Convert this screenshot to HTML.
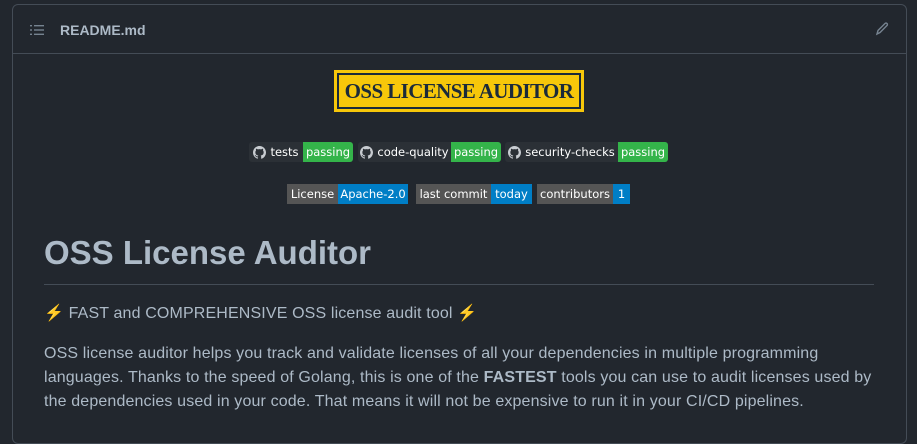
<!DOCTYPE html>
<html><head><meta charset="utf-8"><style>
*{box-sizing:border-box;margin:0;padding:0}
body{width:917px;height:425px;background:#22272e;font-family:"Liberation Sans",sans-serif;color:#adbac7;overflow:hidden;position:relative}
.box{position:absolute;left:12px;top:4px;width:895px;height:440px;border:1px solid #444c56;border-radius:6px}
.hdr{position:absolute;left:0;top:0;right:0;height:49px;border-bottom:1px solid #444c56}
.hdr .t{position:absolute;left:47px;top:17px;font-size:14px;font-weight:bold;color:#adbac7}
.abs{position:absolute}
.b{position:absolute;height:20px;font-family:"DejaVu Sans",sans-serif;font-size:11.5px;color:#fff;line-height:20px;display:flex;border-radius:3px;overflow:hidden}
.b span{display:flex;align-items:center;justify-content:center;white-space:nowrap}
.b svg{margin-right:4px}
.g{background:#2b3036}.gr{background:#34b44a}.gy{background:#555}.bl{background:#007ec6}
p{position:absolute;left:44px;font-size:16px;line-height:24px;color:#adbac7;letter-spacing:0.14px}
</style></head><body>
<div class="box"><div class="hdr">
<svg class="abs" style="left:17px;top:19px" width="14" height="12" viewBox="0 0 14 12"><g fill="#768390"><rect x="0" y="1" width="2" height="1.4"/><rect x="0" y="5.3" width="2" height="1.4"/><rect x="0" y="9.6" width="2" height="1.4"/><rect x="4" y="1" width="10" height="1.4"/><rect x="4" y="5.3" width="10" height="1.4"/><rect x="4" y="9.6" width="10" height="1.4"/></g></svg>
<div class="t">README.md</div>
<svg class="abs" style="left:862px;top:17px" width="14" height="14" viewBox="0 0 14 14"><path d="M2 12l1-3.5 7-7a1.4 1.4 0 0 1 2 2l-7 7z" fill="none" stroke="#768390" stroke-width="1.4"/></svg>
</div></div>
<div class="abs" style="left:334px;top:70px;width:250px;height:42px;background:#f7c70a;padding:3px"><div style="border:2px solid #1b2a3a;height:100%;display:flex;align-items:center;justify-content:center;font-family:'Liberation Serif',serif;font-weight:bold;font-size:21px;color:#1b2a3a;letter-spacing:-0.6px">OSS LICENSE AUDITOR</div></div>
<svg width="0" height="0" style="position:absolute"><defs><symbol id="gh" viewBox="0 0 16 16"><path fill="#c8ccd1" d="M8 0C3.58 0 0 3.58 0 8c0 3.54 2.29 6.53 5.47 7.59.4.07.55-.17.55-.38v-1.33c-2.23.48-2.7-1.07-2.7-1.07-.36-.92-.89-1.17-.89-1.17-.73-.5.06-.49.06-.49.8.06 1.23.83 1.23.83.71 1.22 1.87.87 2.33.66.07-.52.28-.87.51-1.07-1.78-.2-3.64-.89-3.64-3.95 0-.87.31-1.59.82-2.15-.08-.2-.36-1.02.08-2.12 0 0 .67-.21 2.2.82a7.6 7.6 0 0 1 4 0c1.53-1.04 2.2-.82 2.2-.82.44 1.1.16 1.92.08 2.12.51.56.82 1.27.82 2.15 0 3.07-1.87 3.75-3.65 3.95.29.25.54.73.54 1.48v2.2c0 .21.15.46.55.38A8 8 0 0 0 16 8c0-4.42-3.58-8-8-8z"/></symbol></defs></svg>
<div class="b" style="left:249px;top:142px"><span class="g" style="width:54px"><svg width="13" height="13"><use href="#gh"/></svg>tests</span><span class="gr" style="width:50px">passing</span></div>
<div class="b" style="left:358px;top:142px"><span class="g" style="width:93px"><svg width="13" height="13"><use href="#gh"/></svg>code-quality</span><span class="gr" style="width:50px">passing</span></div>
<div class="b" style="left:505px;top:142px"><span class="g" style="width:113px"><svg width="13" height="13"><use href="#gh"/></svg>security-checks</span><span class="gr" style="width:50px">passing</span></div>
<div class="b" style="left:287px;top:184px;border-radius:0"><span class="gy" style="width:51px">License</span><span class="bl" style="width:70px">Apache-2.0</span></div>
<div class="b" style="left:416px;top:184px;border-radius:0"><span class="gy" style="width:75px">last commit</span><span class="bl" style="width:41px">today</span></div>
<div class="b" style="left:537px;top:184px;border-radius:0"><span class="gy" style="width:76px">contributors</span><span class="bl" style="width:17px">1</span></div>
<div class="abs" style="left:44px;top:234px;font-size:33px;font-weight:bold;color:#adbac7">OSS License Auditor</div>
<div class="abs" style="left:44px;top:284px;width:830px;height:1px;background:#444c56"></div>
<p style="top:302px">⚡ FAST and COMPREHENSIVE OSS license audit tool ⚡</p>
<p style="top:342px;width:850px">OSS license auditor helps you track and validate licenses of all your dependencies in multiple programming languages. Thanks to the speed of Golang, this is one of the <b>FASTEST</b> tools you can use to audit licenses used by the dependencies used in your code. That means it will not be expensive to run it in your CI/CD pipelines.</p>
</body></html>
